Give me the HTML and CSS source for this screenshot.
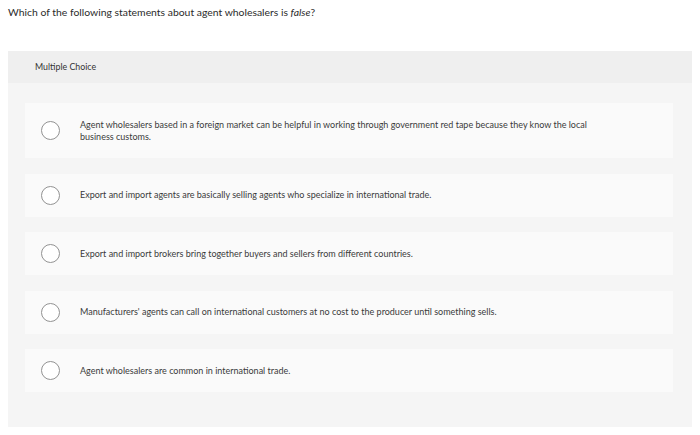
FILE: index.html
```html
<!DOCTYPE html>
<html>
<head>
<meta charset="utf-8">
<link rel="stylesheet" href="styles.css">
</head>
<body>
<div class="question">Which of the following statements about agent wholesalers is <em>false</em>?</div>
<div class="panel">
  <div class="panel-header">Multiple Choice</div>
  <div class="options">
    <div class="option"><span class="radio"></span><span class="label">Agent wholesalers based in a foreign market can be helpful in working through government red tape because they know the local business customs.</span></div>
    <div class="option"><span class="radio"></span><span class="label">Export and import agents are basically selling agents who specialize in international trade.</span></div>
    <div class="option"><span class="radio"></span><span class="label">Export and import brokers bring together buyers and sellers from different countries.</span></div>
    <div class="option"><span class="radio"></span><span class="label">Manufacturers' agents can call on international customers at no cost to the producer until something sells.</span></div>
    <div class="option"><span class="radio"></span><span class="label">Agent wholesalers are common in international trade.</span></div>
  </div>
</div>
</body>
</html>
```
FILE: styles.css
```css
html, body {
  margin: 0;
  padding: 0;
  background: #ffffff;
}
body {
  font-family: Lato, "Open Sans", "Liberation Sans", sans-serif;
  color: #333333;
  width: 700px;
  height: 435px;
  overflow: hidden;
}
.question {
  padding: 5px 8px 0;
  height: 46px;
  font-size: 10.4px;
  line-height: 14px;
  color: #2b2b2b;
}
.panel {
  margin: 0 8px;
  height: 376px;
  background: #f5f5f5;
}
.panel-header {
  height: 32px;
  line-height: 32px;
  padding-left: 27px;
  background: #efefef;
  font-size: 8.8px;
  color: #333;
}
.options {
  padding: 20px 19px 0 17px;
  display: flex;
  flex-direction: column;
  gap: 15.5px;
}
.option {
  display: flex;
  align-items: center;
  background: #fafafa;
  padding: 0 70px 0 16px;
  font-size: 9px;
  line-height: 12px;
}
.radio {
  flex: none;
  width: 17px;
  height: 17px;
  border: 1px solid #929292;
  border-radius: 50%;
  background: #fff;
  margin-right: 20px;
}
.label {
  padding: 15.5px 0;
  color: #3a3a3a;
}
```
